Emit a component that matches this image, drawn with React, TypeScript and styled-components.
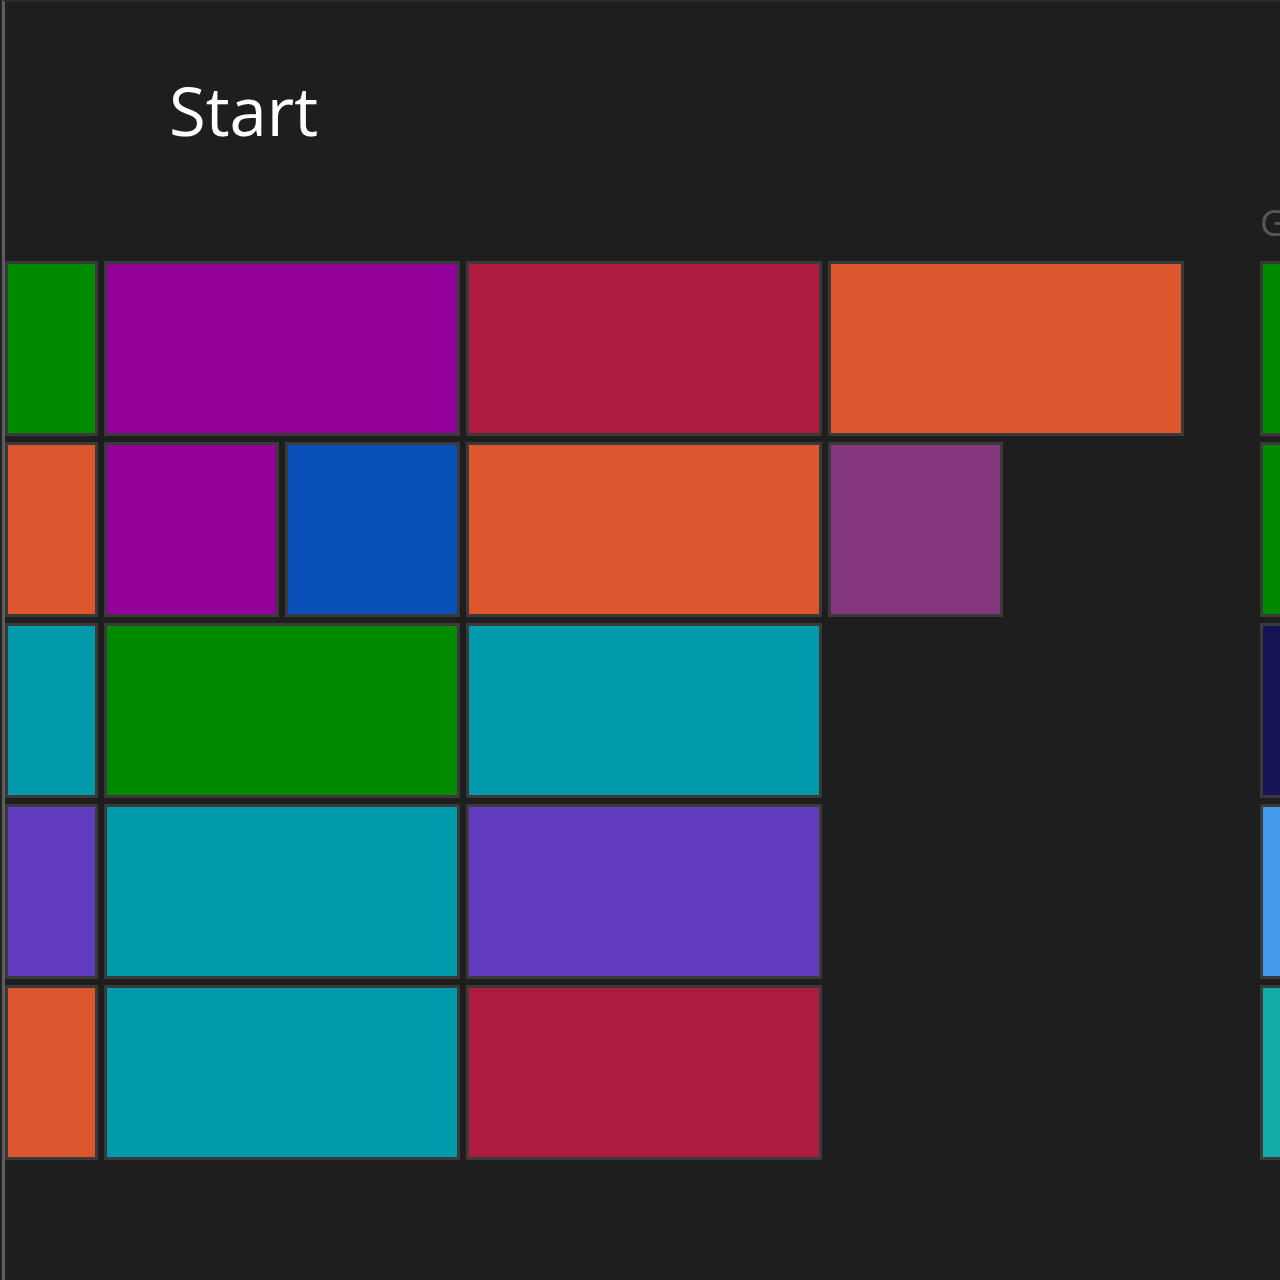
import React from "react";
import styled, { createGlobalStyle } from "styled-components";

const Global = createGlobalStyle`
  html, body {
    margin: 0;
    padding: 0;
    background: #222222;
  }
  #root {
    height: 1280px;
  }
`;

const Screen = styled.div`
  box-sizing: border-box;
  height: 1280px;
  margin-left: 2px;
  border-left: 3px solid #5e5e5e;
  border-top: 2px solid #2b2b2b;
  background-color: #1e1e1e;
  overflow: hidden;
  font-family: "Open Sans", "Liberation Sans", sans-serif;
`;

const Title = styled.h1`
  margin: 75px 0 0 164px;
  font-size: 67px;
  font-weight: 400;
  line-height: 1;
  color: #ffffff;
`;

const Groups = styled.div`
  display: flex;
  align-items: flex-start;
  gap: 76px;
  margin-top: 61px;
  width: max-content;
`;

const Group = styled.section`
  display: flex;
  flex-direction: column;
`;

const GroupName = styled.div`
  height: 56px;
  font-size: 36px;
  line-height: 1;
  color: #565656;
  white-space: nowrap;
`;

const Grid = styled.div<{ $cols: string }>`
  display: grid;
  grid-template-columns: ${(p) => p.$cols};
  grid-auto-rows: 175px;
  gap: 6px;
`;

const Tile = styled.div<{ $bg: string; $span?: number }>`
  box-sizing: border-box;
  grid-column: span ${(p) => p.$span ?? 1};
  background-color: ${(p) => p.$bg};
  border: 3px solid #3a3a3a;
`;

const Spacer = styled.div<{ $span: number }>`
  grid-column: span ${(p) => p.$span};
`;

const c = {
  green: "#008a00",
  purple: "#94009a",
  crimson: "#b01b40",
  orange: "#dc572e",
  blue: "#0950b8",
  plum: "#84377c",
  teal: "#009aad",
  violet: "#613cbc",
  navy: "#141456",
  sky: "#4599ea",
  sea: "#14aca6",
};

type T = { bg: string; span?: number };

const mainTiles: T[][] = [
  [{ bg: c.green }, { bg: c.purple, span: 2 }, { bg: c.crimson, span: 2 }, { bg: c.orange, span: 2 }],
  [{ bg: c.orange }, { bg: c.purple }, { bg: c.blue }, { bg: c.orange, span: 2 }, { bg: c.plum }],
  [{ bg: c.teal }, { bg: c.green, span: 2 }, { bg: c.teal, span: 2 }],
  [{ bg: c.violet }, { bg: c.teal, span: 2 }, { bg: c.violet, span: 2 }],
  [{ bg: c.orange }, { bg: c.teal, span: 2 }, { bg: c.crimson, span: 2 }],
];

const sideTiles = [c.green, c.green, c.navy, c.sky, c.sea];

const Row = ({ tiles, cols }: { tiles: T[]; cols: number }) => {
  const used = tiles.reduce((n, t) => n + (t.span ?? 1), 0);
  return (
    <>
      {tiles.map((t, i) => (
        <Tile key={i} $bg={t.bg} $span={t.span} />
      ))}
      {used < cols && <Spacer $span={cols - used} />}
    </>
  );
};

export default function App() {
  return (
    <>
      <Global />
      <Screen>
        <Title>Start</Title>
        <Groups>
          <Group>
            <GroupName />
            <Grid $cols="93px repeat(6, 175px)">
              {mainTiles.map((r, i) => (
                <Row key={i} tiles={r} cols={7} />
              ))}
            </Grid>
          </Group>
          <Group>
            <GroupName>Games</GroupName>
            <Grid $cols="356px">
              {sideTiles.map((bg, i) => (
                <Tile key={i} $bg={bg} />
              ))}
            </Grid>
          </Group>
        </Groups>
      </Screen>
    </>
  );
}
